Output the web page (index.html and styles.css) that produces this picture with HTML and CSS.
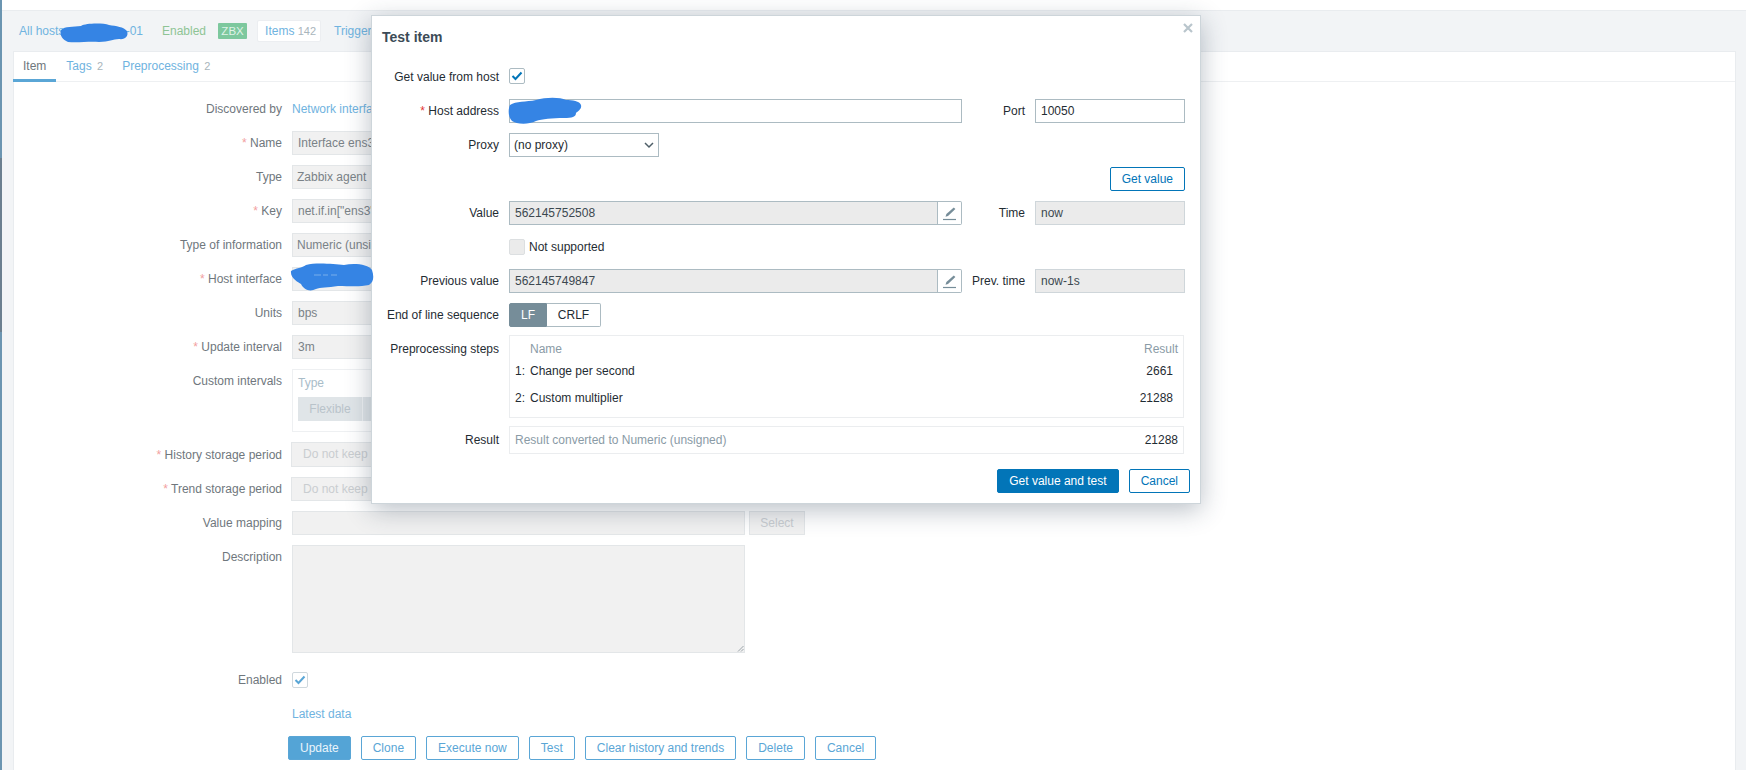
FILE: index.html
```html
<!DOCTYPE html>
<html lang="en">
<head>
<meta charset="utf-8">
<title>Test item</title>
<link rel="stylesheet" href="styles.css">
</head>
<body>
<div class="page">
  <aside class="rail">
    <div class="rail-a"></div>
    <div class="rail-b"></div>
    <div class="rail-a rail-fill"></div>
  </aside>
  <main class="main">
    <div class="topbar"></div>
    <div class="content">
      <nav class="crumbs">
        <a class="crumb-host">All hosts</a>
        <a class="crumb-name">-01</a>
        <span class="crumb-status">Enabled</span>
        <span class="crumb-zbx">ZBX</span>
        <a class="crumb-items">Items <em>142</em></a>
        <a class="crumb-link">Trigger</a>
      </nav>
      <section class="panel">
        <div class="tabs">
          <a class="tab tab-active">Item</a>
          <a class="tab">Tags <em>2</em></a>
          <a class="tab">Preprocessing <em>2</em></a>
        </div>
        <form class="form">
          <div class="lab">Discovered by</div>
          <div class="val"><a class="link">Network interfa</a></div>

          <div class="lab"><span class="req">*</span> Name</div>
          <div class="val"><div class="box">Interface ens3: Bits received</div></div>

          <div class="lab">Type</div>
          <div class="val"><div class="box box-sel">Zabbix agent</div></div>

          <div class="lab"><span class="req">*</span> Key</div>
          <div class="val"><div class="box">net.if.in["ens3"]</div></div>

          <div class="lab">Type of information</div>
          <div class="val"><div class="box box-sel">Numeric (unsigned)</div></div>

          <div class="lab"><span class="req">*</span> Host interface</div>
          <div class="val"><div class="box box-sel"></div></div>

          <div class="lab">Units</div>
          <div class="val"><div class="box">bps</div></div>

          <div class="lab"><span class="req">*</span> Update interval</div>
          <div class="val"><div class="box">3m</div></div>

          <div class="lab lab-top">Custom intervals</div>
          <div class="val">
            <div class="intervals">
              <div class="intervals-head">Type</div>
              <div class="seg-off"><span class="seg-on">Flexible</span><span class="seg-rest"></span></div>
            </div>
          </div>

          <div class="lab"><span class="req">*</span> History storage period</div>
          <div class="val val-tall"><div class="keep">Do not keep</div></div>

          <div class="lab"><span class="req">*</span> Trend storage period</div>
          <div class="val"><div class="keep keep-low">Do not keep</div></div>

          <div class="lab">Value mapping</div>
          <div class="val val-map"><div class="box box-map"></div><div class="select-btn">Select</div></div>

          <div class="lab lab-top">Description</div>
          <div class="val">
            <div class="descr">
              <svg class="grip" width="7" height="7" viewBox="0 0 7 7"><path d="M6.5 1 1 6.5M6.5 4 4 6.5" stroke="#9aa3a9" fill="none"/></svg>
            </div>
          </div>

          <div class="lab row-enabled">Enabled</div>
          <div class="val row-enabled">
            <div class="check check-faded">
              <svg width="12" height="10" viewBox="0 0 12 10"><path d="M1.5 5 4.5 8 10.5 1.5" stroke="#5aa6d6" stroke-width="2" fill="none"/></svg>
            </div>
          </div>

          <div class="lab"></div>
          <div class="val"><a class="link">Latest data</a></div>

          <div class="lab"></div>
          <div class="actions">
            <span class="act act-main">Update</span>
            <span class="act">Clone</span>
            <span class="act">Execute now</span>
            <span class="act">Test</span>
            <span class="act">Clear history and trends</span>
            <span class="act">Delete</span>
            <span class="act">Cancel</span>
          </div>
        </form>
      </section>
    </div>
  </main>
</div>

<div class="dialog">
  <svg class="dlg-close" width="10" height="10" viewBox="0 0 10 10"><path d="M1 1 9 9M9 1 1 9" stroke="#b9c5cc" stroke-width="2.2" fill="none"/></svg>
  <h2 class="dlg-title">Test item</h2>
  <div class="dlg-grid">
    <div class="dlab">Get value from host</div>
    <div class="dval dspan">
      <div class="check check-raised">
        <svg width="12" height="10" viewBox="0 0 12 10"><path d="M1.5 5 4.5 8 10.5 1.5" stroke="#0275b8" stroke-width="2" fill="none"/></svg>
      </div>
    </div>

    <div class="dlab"><span class="dreq">*</span> Host address</div>
    <div class="field"></div>
    <div class="dlab">Port</div>
    <div class="field">10050</div>

    <div class="dlab">Proxy</div>
    <div class="dval dspan">
      <div class="field field-select">(no proxy)
        <svg class="chev" width="10" height="7" viewBox="0 0 10 7"><path d="M1 1 5 5 9 1" stroke="#4f5f68" stroke-width="1.5" fill="none"/></svg>
      </div>
    </div>

    <div class="dlast"><span class="btn">Get value</span></div>

    <div class="dlab">Value</div>
    <div class="combo">
      <div class="field field-ro combo-in">562145752508</div>
      <div class="edit">
        <svg width="18" height="18" viewBox="0 0 18 18"><path d="M4.5 12.8 5.4 10 12.8 3.4 14.4 5 7 12Z" fill="#768d99"/><path d="M2 15.5H15" stroke="#768d99" stroke-width="1.2"/></svg>
      </div>
    </div>
    <div class="dlab">Time</div>
    <div class="field field-ro field-soft">now</div>

    <div class="dlab"></div>
    <div class="dval dspan">
      <div class="check check-off"></div>
      <span class="check-text">Not supported</span>
    </div>

    <div class="dlab">Previous value</div>
    <div class="combo">
      <div class="field field-ro combo-in">562145749847</div>
      <div class="edit">
        <svg width="18" height="18" viewBox="0 0 18 18"><path d="M4.5 12.8 5.4 10 12.8 3.4 14.4 5 7 12Z" fill="#768d99"/><path d="M2 15.5H15" stroke="#768d99" stroke-width="1.2"/></svg>
      </div>
    </div>
    <div class="dlab">Prev. time</div>
    <div class="field field-ro field-soft">now-1s</div>

    <div class="dlab">End of line sequence</div>
    <div class="dval dspan">
      <div class="eol"><span class="eol-on">LF</span><span class="eol-off">CRLF</span></div>
    </div>
  </div>

  <div class="dlg-grid dlg-lower">
    <div class="dlab dlab-top">Preprocessing steps</div>
    <div class="steps">
      <div class="steps-head"><span>Name</span><span>Result</span></div>
      <div class="step"><span>1:</span><span>Change per second</span><span>2661</span></div>
      <div class="step"><span>2:</span><span>Custom multiplier</span><span>21288</span></div>
    </div>

    <div class="dlab">Result</div>
    <div class="result"><span class="result-note">Result converted to Numeric (unsigned)</span><span>21288</span></div>
  </div>

  <div class="dlg-foot">
    <span class="btn btn-main">Get value and test</span>
    <span class="btn">Cancel</span>
  </div>
</div>

<svg class="scribble scribble-hosts" width="70" height="20" viewBox="0 0 70 20"><path d="M2 7C6 3 14 4 22 3 27 0 44 0 50 2 57 3 65 4 68 8 70 13 66 17 60 16 54 16 50 19 40 19 30 18 20 20 9 19 4 17 0 12 2 7Z" fill="#3584e4"/></svg>
<svg class="scribble scribble-addr" width="74" height="27" viewBox="0 0 74 27"><path d="M2 8C8 4 18 5 28 3 38 0 52 0 58 3 64 3 72 4 73 8 74 12 70 14 68 16 68 20 64 21 56 21 44 21 34 22 28 24 20 28 8 27 4 24 0 20 0 12 2 8Z" fill="#3584e4"/></svg>
<svg class="scribble scribble-iface" width="84" height="29" viewBox="0 0 84 29"><path d="M1 9C6 6 12 6 16 3 26 0 44 2 54 3 64 1 78 2 82 8 84 14 84 20 79 23 70 25 60 24 48 24 38 26 30 25 26 27 20 30 14 28 11 22 8 20 0 16 1 9Z" fill="#3584e4"/><path d="M24 13H47" stroke="#78aeeb" stroke-width="1" stroke-dasharray="7 2 5 3" fill="none"/></svg>
</body>
</html>
```

FILE: styles.css
```css
* { box-sizing: border-box; }
html, body { margin: 0; padding: 0; height: 100%; overflow: hidden; }
body {
  font-family: "Liberation Sans", Arial, sans-serif;
  font-size: 12px;
  color: #6f777d;
  background: #fff;
}
a { text-decoration: none; }
em { font-style: normal; }

.page { display: flex; height: 770px; }

.rail { width: 2px; display: flex; flex-direction: column; flex: none; }
.rail-a { height: 158px; background: #6b95b1; }
.rail-b { height: 174px; background: #6b7f8f; }
.rail-fill { flex: 1; }

.main { flex: 1; min-width: 0; display: flex; flex-direction: column; }
.topbar { height: 11px; background: #fff; border-bottom: 1px solid #e9ecef; flex: none; }
.content { flex: 1; background: #f2f4f6; padding: 0 10px 0 11px; display: flex; flex-direction: column; min-height: 0; }

.crumbs { height: 40px; display: flex; align-items: center; padding: 0 0 0 6px; flex: none; }
.crumb-host { color: #6fb3e0; width: 60px; }
.crumb-name { color: #6fb3e0; width: 35px; text-align: right; margin-right: 19px; flex: none; margin-left: 29px; }
.crumb-status { color: #8ec495; margin-right: 12px; }
.crumb-zbx { background: #7dc89e; color: #dff3e8; width: 29px; height: 16px; line-height: 16px; text-align: center; font-size: 11.5px; margin-right: 10px; border-radius: 1px; }
.crumb-items { background: #fff; border: 1px solid #eceef1; color: #6fb3e0; width: 64px; height: 22px; line-height: 20px; padding-left: 7px; margin-right: 13px; border-radius: 2px; white-space: nowrap; }
.crumb-items em { color: #a9b5bc; font-size: 11px; }
.crumb-link { color: #6fb3e0; }

.panel { flex: 1; background: #fff; border: 1px solid #e9ecef; border-bottom: 0; min-height: 0; }

.tabs { height: 30px; display: flex; border-bottom: 1px solid #eef0f2; margin-left: -1px; }
.tab { height: 30px; padding: 0 10px; line-height: 28px; color: #6fb3e0; border-bottom: 3px solid transparent; }
.tab em { color: #a9b5bc; font-size: 11px; margin-left: 2px; }
.tab-active { color: #6f777d; border-bottom-color: #5aa6d6; }
.tab:nth-child(3) { padding-left: 9px; }

.form {
  display: grid;
  grid-template-columns: 268px 1fr;
  column-gap: 10px;
  row-gap: 10px;
  padding-top: 15px;
  align-items: center;
}
.lab { text-align: right; line-height: 24px; min-height: 24px; color: #6f777d; }
.lab-top { align-self: start; line-height: 14px; padding-top: 5px; }
.req { color: #f2a0a0; }
.val { min-height: 24px; line-height: 24px; display: flex; align-items: center; }
.val-tall { min-height: 25px; }
.link { color: #6fb3e0; white-space: nowrap; }

.box { width: 453px; height: 24px; line-height: 22px; background: #f1f1f1; border: 1px solid #e3e6e8; padding: 0 5px; color: #7a8287; white-space: nowrap; overflow: hidden; }
.box-sel { padding-left: 4px; }
.box-map { height: 24px; }
.val-map { gap: 4px; }
.select-btn { width: 56px; height: 24px; line-height: 22px; text-align: center; background: #f1f1f1; border: 1px solid #e3e6e8; color: #c8ccd0; }

.intervals { width: 453px; height: 63px; border: 1px solid #eef0f2; padding: 5px; }
.intervals-head { color: #a9bdc9; line-height: 16px; margin-bottom: 6px; }
.seg-off { display: flex; height: 24px; line-height: 24px; background: #e0e5e8; color: #b9c3ca; width: 200px; }
.seg-on { width: 65px; text-align: center; border-right: 1px solid #eff1f3; }
.seg-rest { flex: 1; }

.keep { width: 300px; height: 25px; line-height: 23px; margin-left: -1px; background: #f1f1f1; border: 1px solid #e3e6e8; color: #c9cdd0; padding-left: 11px; white-space: nowrap; overflow: hidden; }
.keep-low { height: 24px; line-height: 22px; }

.descr { width: 453px; height: 108px; background: #f1f1f1; border: 1px solid #e3e6e8; position: relative; }
.grip { position: absolute; right: 0; bottom: 0; }

.row-enabled { margin-top: 5px; }
.check { width: 16px; height: 16px; background: #fff; border: 1px solid #acbbc2; border-radius: 2px; display: flex; align-items: center; justify-content: center; flex: none; }
.check-faded { border-color: #cfd8dd; }
.check-off { background: #ebebeb; border-color: #dcdfe1; }
.check-raised { margin-bottom: 2px; }

.actions { display: flex; gap: 10px; margin-left: -4px; }
.act { height: 24px; line-height: 22px; padding: 0 11px; border: 1px solid #5aa6d6; color: #5aa6d6; border-radius: 2px; background: #fff; white-space: nowrap; }
.act-main { background: #54a4d6; color: #eaf4fb; }

/* test dialog, floating over the form */
.dialog {
  position: absolute;
  left: 371px;
  top: 15px;
  width: 830px;
  background: #fff;
  border: 1px solid #cdd5da;
  box-shadow: 0 6px 24px rgba(40, 60, 80, .32);
  color: #1f2c33;
  padding-bottom: 10px;
}
.dlg-close { position: absolute; right: 7px; top: 7px; }
.dlg-title { margin: 0 0 7px; height: 42px; line-height: 42px; padding-left: 10px; font-size: 14px; font-weight: bold; color: #3c4b57; }

.dlg-grid {
  display: grid;
  grid-template-columns: 127px 453px 53px 150px;
  column-gap: 10px;
  row-gap: 10px;
  align-items: center;
}
.dlg-lower { margin-top: 8px; row-gap: 8px; }
.dlab { text-align: right; line-height: 24px; min-height: 24px; white-space: nowrap; }
.dlab-top { align-self: start; padding-top: 2px; }
.dreq { color: #e33734; }
.dval { display: flex; align-items: center; min-height: 24px; }
.dspan { grid-column: 2 / 5; }
.dlast { grid-column: 1 / 5; display: flex; justify-content: flex-end; }

.field { height: 24px; line-height: 22px; border: 1px solid #acbbc2; padding: 0 5px; background: #fff; color: #1f2c33; white-space: nowrap; }
.field-select { width: 150px; padding-left: 4px; position: relative; }
.chev { position: absolute; right: 4px; top: 8px; }
.field-ro { background: #ebebeb; color: #3c4850; }
.field-soft { border-color: #cfd6da; }

.combo { display: flex; }
.combo-in { flex: 1; }
.edit { width: 24px; height: 24px; border: 1px solid #acbbc2; border-left: 0; background: #fff; display: flex; align-items: center; justify-content: center; border-radius: 0 2px 2px 0; }

.check-text { margin-left: 4px; }

.eol { display: flex; height: 24px; line-height: 22px; }
.eol-on { width: 38px; background: #768d99; color: #fff; border: 1px solid #768d99; text-align: center; border-radius: 2px 0 0 2px; }
.eol-off { width: 54px; background: #fff; border: 1px solid #acbbc2; border-left: 0; text-align: center; border-radius: 0 2px 2px 0; }

.steps { grid-column: 2 / 5; margin-right: 1px; border: 1px solid #ebedef; padding: 6px 5px 5px 5px; }
.steps-head { display: flex; justify-content: space-between; height: 16px; line-height: 15px; padding-left: 15px; color: #8a9ba6; }
.step { display: grid; grid-template-columns: 15px 1fr auto; height: 27px; line-height: 27px; padding-right: 5px; }
.result { grid-column: 2 / 5; margin-right: 1px; height: 28px; line-height: 26px; border: 1px solid #ebedef; padding: 0 5px; display: flex; justify-content: space-between; }
.result-note { color: #8a9ba6; }

.dlg-foot { display: flex; justify-content: flex-end; gap: 10px; margin-top: 15px; padding-right: 10px; }
.btn { display: inline-block; height: 24px; line-height: 22px; padding: 0 11px; border: 1px solid #0275b8; color: #0275b8; background: #fff; border-radius: 2px; white-space: nowrap; }
.btn-main { background: #0275b8; color: #fff; }

/* blue annotation strokes lying over the screenshot */
.scribble { position: absolute; }
.scribble-hosts { left: 59px; top: 23px; }
.scribble-addr { left: 508px; top: 97px; }
.scribble-iface { left: 290px; top: 262px; }
```
